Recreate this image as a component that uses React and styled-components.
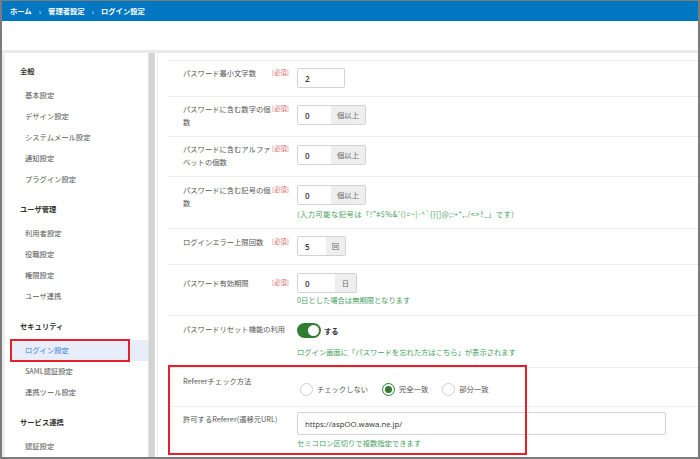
import React from "react";
import styled, { createGlobalStyle } from "styled-components";

const Global = createGlobalStyle`
  html, body { margin: 0; padding: 0; background: #fff; }
  * { box-sizing: border-box; }
  body { font-family: "Noto Sans CJK JP", "Noto Sans", sans-serif; }
`;

const Frame = styled.div`
  width: 700px;
  height: 459px;
  border: 2px solid #7b7b7b;
  border-top-width: 1px;
  display: flex;
  flex-direction: column;
  overflow: hidden;
  font-size: 7.3px;
  color: #555;
`;

const Header = styled.div`
  height: 20px;
  flex: none;
  background: #0077c0;
  color: #fff;
  font-weight: 700;
  display: flex;
  align-items: center;
  gap: 7px;
  padding-left: 8px;
  font-size: 7.3px;
`;

const Crumb = styled.span``;
const Sep = styled.span`
  font-weight: 400;
  font-size: 8px;
  opacity: 0.9;
`;

const Band = styled.div`
  height: 29px;
  flex: none;
  background: #fff;
`;

const Divider = styled.div`
  height: 3px;
  flex: none;
  background: #eaeaea;
`;

const Body = styled.div`
  flex: 1;
  display: flex;
  min-height: 0;
`;

const Sidebar = styled.div`
  width: 156px;
  flex: none;
  display: flex;
  background: #efefef;
  padding-left: 3px;
  border-right: 1px solid #ececec;
`;

const Panel = styled.div`
  flex: 1;
  background: #fff;
  padding-top: 5px;
  display: flex;
  flex-direction: column;
  gap: 6px;
`;

const Scrollbar = styled.div`
  width: 7px;
  background: #d3d3d3;
  border-left: 1px solid #e2e2e2;
  border-right: 1px solid #dcdcdc;
`;

const ScrollGap = styled.div`
  width: 2px;
  background: #fff;
`;

const Group = styled.div`
  display: flex;
  flex-direction: column;
`;

const GroupTitle = styled.div`
  height: 27px;
  line-height: 27px;
  padding-left: 15px;
  font-weight: 700;
  color: #333;
`;

const NavItem = styled.div`
  position: relative;
  height: 21px;
  line-height: 21px;
  padding-left: ${(p) => (p.$active ? 15 : 20)}px;
  margin-left: ${(p) => (p.$active ? 5 : 0)}px;
  color: ${(p) => (p.$active ? "#3b7dd8" : "#555")};
  background: ${(p) => (p.$active ? "#e7eefa" : "transparent")};
`;

const NavMark = styled.span`
  position: absolute;
  left: 0;
  top: -1px;
  width: 120px;
  height: 23px;
  border: 2px solid #e5202b;
  pointer-events: none;
`;

const Main = styled.div`
  flex: 1;
  background: #fff;
  padding: 7px 0 0 10px;
  display: flex;
  flex-direction: column;
  min-width: 0;
`;

const Row = styled.div`
  display: flex;
  border-top: 1px solid #ededed;
  padding: ${(p) => p.$pad || "6px 0 7px 15px"};
`;

const LabelCell = styled.div`
  width: 114px;
  flex: none;
  display: flex;
  align-items: flex-start;
  padding-top: ${(p) => p.$top || 0}px;
`;

const LabelText = styled.div`
  width: ${(p) => p.$w || 89}px;
  flex: none;
  line-height: 13px;
  color: #555;
  white-space: ${(p) => (p.$nowrap ? "nowrap" : "normal")};
`;

const Required = styled.span`
  color: #d9686a;
  font-size: 6.3px;
  line-height: 13px;
  margin-top: -1px;
  white-space: nowrap;
`;

const Field = styled.div`
  display: flex;
  flex-direction: column;
  align-items: flex-start;
  padding-top: ${(p) => p.$top || 1}px;
  flex: 1;
  min-width: 0;
`;

const InputGroup = styled.div`
  display: flex;
  height: ${(p) => p.$h || 20}px;
  border: 1px solid #d2d2d2;
  border-radius: 2px;
  overflow: hidden;
  background: #fff;
  width: ${(p) => (p.$full ? "100%" : p.$w ? p.$w + "px" : "auto")};
`;

const Value = styled.div`
  width: ${(p) => p.$w}px;
  padding-left: 7px;
  display: flex;
  align-items: center;
  color: #333;
  font-weight: 600;
  font-size: 8px;
  font-family: "Open Sans", "Noto Sans", sans-serif;
`;

const UrlValue = styled.div`
  flex: 1;
  padding-left: 7px;
  display: flex;
  align-items: center;
  color: #333;
  font-size: 7.8px;
  font-family: "Open Sans", "Noto Sans", sans-serif;
`;

const Addon = styled.div`
  width: ${(p) => p.$w}px;
  background: #eeeeee;
  display: flex;
  align-items: center;
  justify-content: center;
  color: #666;
`;

const Help = styled.div`
  color: #3f9e5e;
  margin-top: ${(p) => p.$mt || 3}px;
  line-height: 12px;
  white-space: nowrap;
  letter-spacing: ${(p) => p.$ls || 0}px;
`;

const ToggleLine = styled.div`
  display: flex;
  align-items: center;
  gap: 3px;
  height: 15px;
`;

const Toggle = styled.div`
  width: 24px;
  height: 15px;
  border-radius: 8px;
  background: #2e7d32;
  position: relative;
  &::after {
    content: "";
    position: absolute;
    right: 2px;
    top: 2px;
    width: 11px;
    height: 11px;
    border-radius: 50%;
    background: #fff;
  }
`;

const ToggleText = styled.span`
  color: #333;
  font-weight: 700;
`;

const Highlight = styled.div`
  position: relative;
  display: flex;
  flex-direction: column;
  &::after {
    content: "";
    position: absolute;
    left: 0;
    top: -2px;
    width: 355px;
    height: 86px;
    border: 2px solid #e5202b;
    pointer-events: none;
  }
`;

const Radios = styled.div`
  display: flex;
  align-items: center;
  height: 14px;
  margin-top: 6px;
  padding-left: 3px;
`;

const RadioOpt = styled.div`
  display: flex;
  align-items: center;
  gap: 4px;
  margin-right: 14px;
  color: #555;
`;

const Circle = styled.span`
  width: 13px;
  height: 13px;
  border-radius: 50%;
  border: 1px solid ${(p) => (p.$on ? "#2e7d32" : "#cfcfcf")};
  display: flex;
  align-items: center;
  justify-content: center;
  background: #fff;
  &::after {
    content: "";
    width: 7px;
    height: 7px;
    border-radius: 50%;
    background: ${(p) => (p.$on ? "#2e7d32" : "transparent")};
  }
`;

const nav = [
  { title: "全般", items: ["基本設定", "デザイン設定", "システムメール設定", "通知設定", "プラグイン設定"] },
  { title: "ユーザ管理", items: ["利用者設定", "役職設定", "権限設定", "ユーザ連携"] },
  { title: "セキュリティ", items: ["ログイン設定", "SAML認証設定", "連携ツール設定"] },
  { title: "サービス連携", items: ["認証設定"] },
];

function Label({ children, top }) {
  return (
    <LabelCell $top={top}>
      <LabelText>{children}</LabelText>
      <Required>[必須]</Required>
    </LabelCell>
  );
}

export default function App() {
  return (
    <>
      <Global />
      <Frame>
        <Header>
          <Crumb>ホーム</Crumb>
          <Sep>›</Sep>
          <Crumb>管理者設定</Crumb>
          <Sep>›</Sep>
          <Crumb>ログイン設定</Crumb>
        </Header>
        <Band />
        <Divider />
        <Body>
          <Sidebar>
            <Panel>
              {nav.map((g) => (
                <Group key={g.title}>
                  <GroupTitle>{g.title}</GroupTitle>
                  {g.items.map((it) => (
                    <NavItem key={it} $active={it === "ログイン設定"}>
                      {it === "ログイン設定" && <NavMark />}
                      {it}
                    </NavItem>
                  ))}
                </Group>
              ))}
            </Panel>
            <Scrollbar />
            <ScrollGap />
          </Sidebar>
          <Main>
            <Row $pad="6px 0 8px 15px">
              <Label>パスワード最小文字数</Label>
              <Field>
                <InputGroup $w={48}>
                  <Value $w={46}>2</Value>
                </InputGroup>
              </Field>
            </Row>
            <Row>
              <Label>パスワードに含む数字の個数</Label>
              <Field $top={2}>
                <InputGroup>
                  <Value $w={33}>0</Value>
                  <Addon $w={34}>個以上</Addon>
                </InputGroup>
              </Field>
            </Row>
            <Row>
              <Label>パスワードに含むアルファベットの個数</Label>
              <Field $top={2}>
                <InputGroup>
                  <Value $w={33}>0</Value>
                  <Addon $w={34}>個以上</Addon>
                </InputGroup>
              </Field>
            </Row>
            <Row $pad="7px 0 8px 15px">
              <Label>パスワードに含む記号の個数</Label>
              <Field>
                <InputGroup>
                  <Value $w={33}>0</Value>
                  <Addon $w={34}>個以上</Addon>
                </InputGroup>
                <Help $ls={0.45}>(入力可能な記号は「!"#$%&amp;'()=~|-^`{"{}"}[]@;:+*,./&lt;&gt;?_」です)</Help>
              </Field>
            </Row>
            <Row $pad="6px 0 8px 15px">
              <Label top={1}>ログインエラー上限回数</Label>
              <Field>
                <InputGroup>
                  <Value $w={28}>5</Value>
                  <Addon $w={19}>回</Addon>
                </InputGroup>
              </Field>
            </Row>
            <Row $pad="7px 0 9px 15px">
              <Label top={5}>パスワード有効期限</Label>
              <Field>
                <InputGroup>
                  <Value $w={37}>0</Value>
                  <Addon $w={21}>日</Addon>
                </InputGroup>
                <Help $mt={1}>0日とした場合は無期限となります</Help>
              </Field>
            </Row>
            <Row $pad="6px 0 9px 15px">
              <LabelCell $top={1}>
                <LabelText $w={114} $nowrap>パスワードリセット機能の利用</LabelText>
              </LabelCell>
              <Field $top={1}>
                <ToggleLine>
                  <Toggle />
                  <ToggleText>する</ToggleText>
                </ToggleLine>
                <Help $mt={8}>ログイン画面に「パスワードを忘れた方はこちら」が表示されます</Help>
              </Field>
            </Row>
            <Highlight>
              <Row $pad="7px 0 10px 15px">
                <LabelCell>
                  <LabelText $w={114}>Refererチェック方法</LabelText>
                </LabelCell>
                <Field $top={0}>
                  <Radios>
                    <RadioOpt>
                      <Circle />
                      チェックしない
                    </RadioOpt>
                    <RadioOpt>
                      <Circle $on />
                      完全一致
                    </RadioOpt>
                    <RadioOpt>
                      <Circle />
                      部分一致
                    </RadioOpt>
                  </Radios>
                </Field>
              </Row>
              <Row $pad="4px 32px 8px 15px">
                <LabelCell $top={2}>
                  <LabelText $w={114}>許可するReferer(遷移元URL)</LabelText>
                </LabelCell>
                <Field $top={0}>
                  <InputGroup $full $h={23}>
                    <UrlValue>https://aspOO.wawa.ne.jp/</UrlValue>
                  </InputGroup>
                  <Help $mt={2}>セミコロン区切りで複数指定できます</Help>
                </Field>
              </Row>
            </Highlight>
          </Main>
        </Body>
      </Frame>
    </>
  );
}
